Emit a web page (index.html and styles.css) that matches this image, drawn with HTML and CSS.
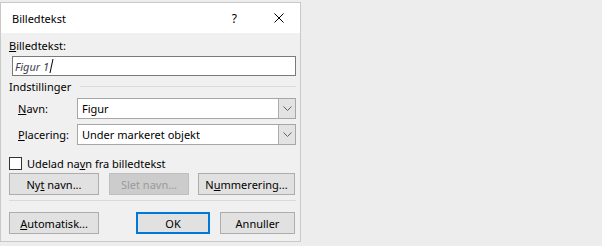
FILE: index.html
```html
<!DOCTYPE html>
<html lang="da">
<head>
  <meta charset="UTF-8">
  <title>Billedtekst</title>
  <link rel="stylesheet" href="styles.css">
</head>
<body>
  <div class="dialog">
    <div class="titlebar">
      <span class="title">Billedtekst</span>
      <span class="help">?</span>
      <span class="close">
        <svg width="10" height="10" viewBox="0 0 10 10"><path d="M0.5 0.5 L9.5 9.5 M9.5 0.5 L0.5 9.5" stroke="#000" stroke-width="1" fill="none"/></svg>
      </span>
    </div>

    <div class="content">
      <div class="field-label"><u>B</u>illedtekst:</div>
      <div class="textbox"><span class="typed">Figur 1</span><span class="caret"></span></div>

      <div class="group-head">
        <span>Indstillinger</span>
        <span class="rule"></span>
      </div>

      <div class="combo-row">
        <span class="combo-label"><u>N</u>avn:</span>
        <div class="combo">
          <span class="combo-value">Figur</span>
          <span class="combo-btn"><svg width="9" height="5" viewBox="0 0 9 5"><path d="M0.5 0.5 L4.5 4.5 L8.5 0.5" stroke="#606060" fill="none"/></svg></span>
        </div>
      </div>
      <div class="combo-row">
        <span class="combo-label"><u>P</u>lacering:</span>
        <div class="combo">
          <span class="combo-value">Under markeret objekt</span>
          <span class="combo-btn"><svg width="9" height="5" viewBox="0 0 9 5"><path d="M0.5 0.5 L4.5 4.5 L8.5 0.5" stroke="#606060" fill="none"/></svg></span>
        </div>
      </div>

      <label class="check-row">
        <span class="checkbox"></span>
        <span>Udelad na<u>v</u>n fra billedtekst</span>
      </label>

      <div class="btn-row">
        <button class="btn btn-nyt">Ny<u>t</u> navn...</button>
        <button class="btn btn-slet" disabled>Slet navn...</button>
        <button class="btn btn-num">N<u>u</u>mmerering...</button>
      </div>

      <div class="sep"></div>

      <div class="btn-row bottom">
        <button class="btn btn-auto"><u>A</u>utomatisk...</button>
        <button class="btn btn-ok">OK</button>
        <button class="btn btn-cancel">Annuller</button>
      </div>
    </div>
  </div>
</body>
</html>
```

FILE: styles.css
```css
* {
  box-sizing: border-box;
}
body {
  margin: 0;
  background: #ededed;
  font-family: 'Segoe UI', 'Noto Sans', sans-serif;
  font-size: 11px;
  color: #000;
}
u {
  text-decoration: underline;
  text-underline-offset: 1px;
}
.dialog {
  width: 301px;
  height: 240px;
  margin-top: 2px;
  border: 1px solid #c9c9c9;
  background: #f0f0f0;
}
.titlebar {
  height: 30px;
  background: #fff;
  display: flex;
  align-items: center;
}
.title {
  padding-left: 11px;
  flex: 1;
  color: #000;
}
.help {
  font-size: 12px;
  margin-right: 37px;
}
.close {
  width: 10px;
  height: 10px;
  margin-right: 16px;
  display: flex;
}
.content {
  padding: 0 0 0 8px;
}
.field-label {
  margin-top: 5px;
  height: 16px;
  line-height: 16px;
}
.textbox {
  margin: 2px 0 0 3px;
  height: 20px;
  width: 284px;
  border: 1px solid #7a7a7a;
  background: #fff;
  display: flex;
  align-items: center;
  padding-left: 2px;
}
.typed {
  font-style: italic;
  color: #3e4150;
}
.caret {
  width: 1px;
  height: 14px;
  background: #000;
  margin-left: 2px;
  transform: skewX(-12deg);
}
.group-head {
  margin-top: 2px;
  display: flex;
  align-items: center;
  height: 16px;
  width: 287px;
}
.rule {
  flex: 1;
  height: 1px;
  background: #dadada;
  margin-left: 9px;
}
.combo-row {
  display: flex;
  align-items: center;
  margin-top: 4px;
  padding-left: 9px;
}
.combo-row + .combo-row {
  margin-top: 5px;
}
.combo-label {
  width: 59px;
  flex: none;
}
.combo {
  width: 219px;
  height: 21px;
  border: 1px solid #a6a6a6;
  background: #fff;
  display: flex;
  align-items: stretch;
}
.combo-value {
  flex: 1;
  padding-left: 4px;
  line-height: 19px;
}
.combo-btn {
  width: 17px;
  background: #e3e3e3;
  border-left: 1px solid #adadad;
  display: flex;
  align-items: center;
  justify-content: center;
}
.check-row {
  display: flex;
  align-items: center;
  margin-top: 10px;
  height: 16px;
}
.checkbox {
  width: 13px;
  height: 13px;
  border: 1px solid #333;
  background: #fff;
  margin-right: 5px;
}
.btn-row {
  display: flex;
  margin-top: 2px;
}
.btn {
  font-family: inherit;
  font-size: 11px;
  height: 22px;
  padding: 0;
  border: 1px solid #adadad;
  background: #e1e1e1;
  color: #000;
}
.btn-nyt, .btn-auto {
  width: 90px;
}
.btn-slet {
  width: 80px;
  margin-left: 10px;
  background: #cccccc;
  border-color: #bfbfbf;
  color: #9a9a9a;
}
.btn-num {
  width: 97px;
  margin-left: 9px;
}
.sep {
  margin-top: 5px;
  height: 1px;
  width: 287px;
  background: #dadada;
}
.btn-row.bottom {
  margin-top: 11px;
}
.btn-ok {
  width: 74px;
  margin-left: 37px;
  border: 2px solid #0078d7;
}
.btn-cancel {
  width: 75px;
  margin-left: 10px;
}
```
